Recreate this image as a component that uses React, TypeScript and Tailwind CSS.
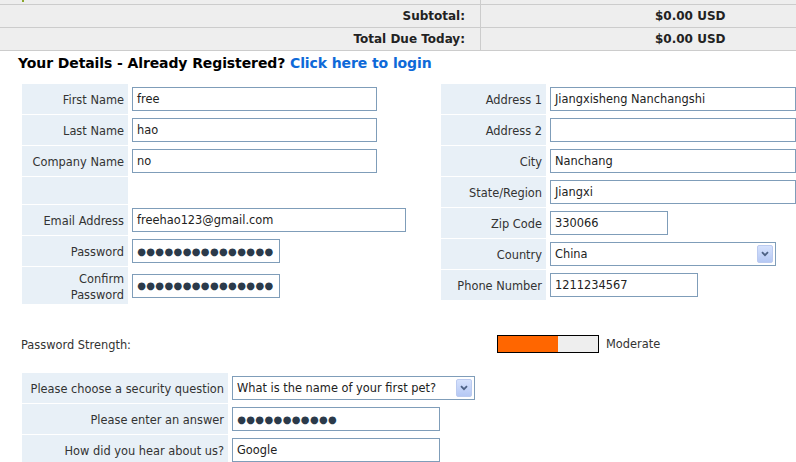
import React from "react";

const font = { fontFamily: '"DejaVu Sans", Verdana, sans-serif' };

const Field = ({ value, w }: { value: string; w: string }) => (
  <div className={`${w} h-[24px] border border-[#7f9db9] bg-white flex items-center px-[4px] pt-[2px] overflow-hidden whitespace-nowrap text-[#222]`}>
    {value}
  </div>
);

const Secret = ({ count, w }: { count: number; w: string }) => (
  <div className={`${w} h-[24px] border border-[#7f9db9] bg-white flex items-center px-[4px] overflow-hidden whitespace-nowrap text-[#2b3a4a] text-[10px]`}>
    {Array.from({ length: count }).map((_, i) => (
      <span key={i} className="inline-block w-[9.1px] text-center">
        ●
      </span>
    ))}
  </div>
);

const Select = ({ value, w }: { value: string; w: string }) => (
  <div className={`${w} h-[24px] border border-[#7f9db9] bg-white flex items-center pl-[4px] pr-[2px] text-[#222]`}>
    <span className="flex-1 whitespace-nowrap overflow-hidden pt-[2px]">{value}</span>
    <span className="w-[16px] h-[18px] rounded-[2px] border border-[#bccbf0] bg-[linear-gradient(#d6e2fd,#b5c8f4)] flex items-center justify-center">
      <svg width="8" height="6" viewBox="0 0 8 6">
        <path d="M1 1.2 L4 4.2 L7 1.2" fill="none" stroke="#4d6185" strokeWidth="1.8" />
      </svg>
    </span>
  </div>
);

const Row = ({
  label,
  labelW,
  h = "h-[30px]",
  children,
}: {
  label?: React.ReactNode;
  labelW: string;
  h?: string;
  children?: React.ReactNode;
}) => (
  <div className={`flex ${h} mb-[1px]`}>
    <div className={`${labelW} bg-[#e8f0f7] flex items-center justify-end text-right pr-[4px] pt-[2px] text-[#333] leading-[16px] whitespace-nowrap`}>
      {label}
    </div>
    <div className="flex items-center pl-[4px]">{children}</div>
  </div>
);

const App = () => {
  return (
    <div className="w-[796px] h-[462px] overflow-hidden bg-white text-[11.4px]" style={font}>
      {/* order summary */}
      <div className="bg-[#eeeeee] text-[#222] font-bold text-[12px]">
        <div className="flex h-[5px] border-b border-[#cccccc]">
          <div className="w-[481px] border-r border-[#cccccc] pl-[22px]">
            <span className="block w-[2px] h-[2px] bg-[#8aa62c]"></span>
          </div>
          <div className="flex-1"></div>
        </div>
        <div className="flex h-[23px] border-b border-[#cccccc]">
          <div className="w-[481px] border-r border-[#cccccc] flex items-center justify-end pr-[15px]">Subtotal:</div>
          <div className="flex-1 flex items-center pl-[174px]">$0.00 USD</div>
        </div>
        <div className="flex h-[23px] border-b border-[#cccccc]">
          <div className="w-[481px] border-r border-[#cccccc] flex items-center justify-end pr-[15px]">Total Due Today:</div>
          <div className="flex-1 flex items-center pl-[174px]">$0.00 USD</div>
        </div>
      </div>

      <h2 className="h-[24px] pl-[18px] flex items-center text-[14px] font-bold text-black whitespace-nowrap tracking-[-0.1px]">
        Your Details - Already Registered?&nbsp;<span className="text-[#0e69d8]">Click here to login</span>
      </h2>

      <div className="flex mt-[9px]">
        <div className="w-[441px] pl-[22px]">
          <Row label="First Name" labelW="w-[106px]">
            <Field value="free" w="w-[245px]" />
          </Row>
          <Row label="Last Name" labelW="w-[106px]">
            <Field value="hao" w="w-[245px]" />
          </Row>
          <Row label="Company Name" labelW="w-[106px]">
            <Field value="no" w="w-[245px]" />
          </Row>
          <Row labelW="w-[106px]" h="h-[27px]" />
          <Row label="Email Address" labelW="w-[106px]">
            <Field value="freehao123@gmail.com" w="w-[274px]" />
          </Row>
          <Row label="Password" labelW="w-[106px]">
            <Secret count={15} w="w-[148px]" />
          </Row>
          <Row
            label={
              <span>
                Confirm
                <br />
                Password
              </span>
            }
            labelW="w-[106px]"
            h="h-[37px]"
          >
            <Secret count={15} w="w-[148px]" />
          </Row>
        </div>

        <div className="flex-1">
          <Row label="Address 1" labelW="w-[105px]">
            <Field value="Jiangxisheng Nanchangshi" w="w-[246px]" />
          </Row>
          <Row label="Address 2" labelW="w-[105px]">
            <Field value="" w="w-[246px]" />
          </Row>
          <Row label="City" labelW="w-[105px]">
            <Field value="Nanchang" w="w-[246px]" />
          </Row>
          <Row label="State/Region" labelW="w-[105px]">
            <Field value="Jiangxi" w="w-[246px]" />
          </Row>
          <Row label="Zip Code" labelW="w-[105px]">
            <Field value="330066" w="w-[118px]" />
          </Row>
          <Row label="Country" labelW="w-[105px]">
            <Select value="China" w="w-[226px]" />
          </Row>
          <Row label="Phone Number" labelW="w-[105px]">
            <Field value="1211234567" w="w-[148px]" />
          </Row>
        </div>
      </div>

      <div className="flex items-center h-[18px] mt-[30px] text-[#333]">
        <div className="w-[497px] pl-[21px] pt-[3px]">Password Strength:</div>
        <div className="w-[102px] h-[18px] border border-black bg-[#eeeeee] flex">
          <div className="w-[60px] bg-[#ff6600]"></div>
        </div>
        <div className="ml-[7px] pt-[2px]">Moderate</div>
      </div>

      <div className="pl-[22px] mt-[20px]">
        <Row label="Please choose a security question" labelW="w-[206px]">
          <Select value="What is the name of your first pet?" w="w-[243px]" />
        </Row>
        <Row label="Please enter an answer" labelW="w-[206px]">
          <Secret count={11} w="w-[208px]" />
        </Row>
        <Row label="How did you hear about us?" labelW="w-[206px]">
          <Field value="Google" w="w-[208px]" />
        </Row>
      </div>
    </div>
  );
};

export default App;
